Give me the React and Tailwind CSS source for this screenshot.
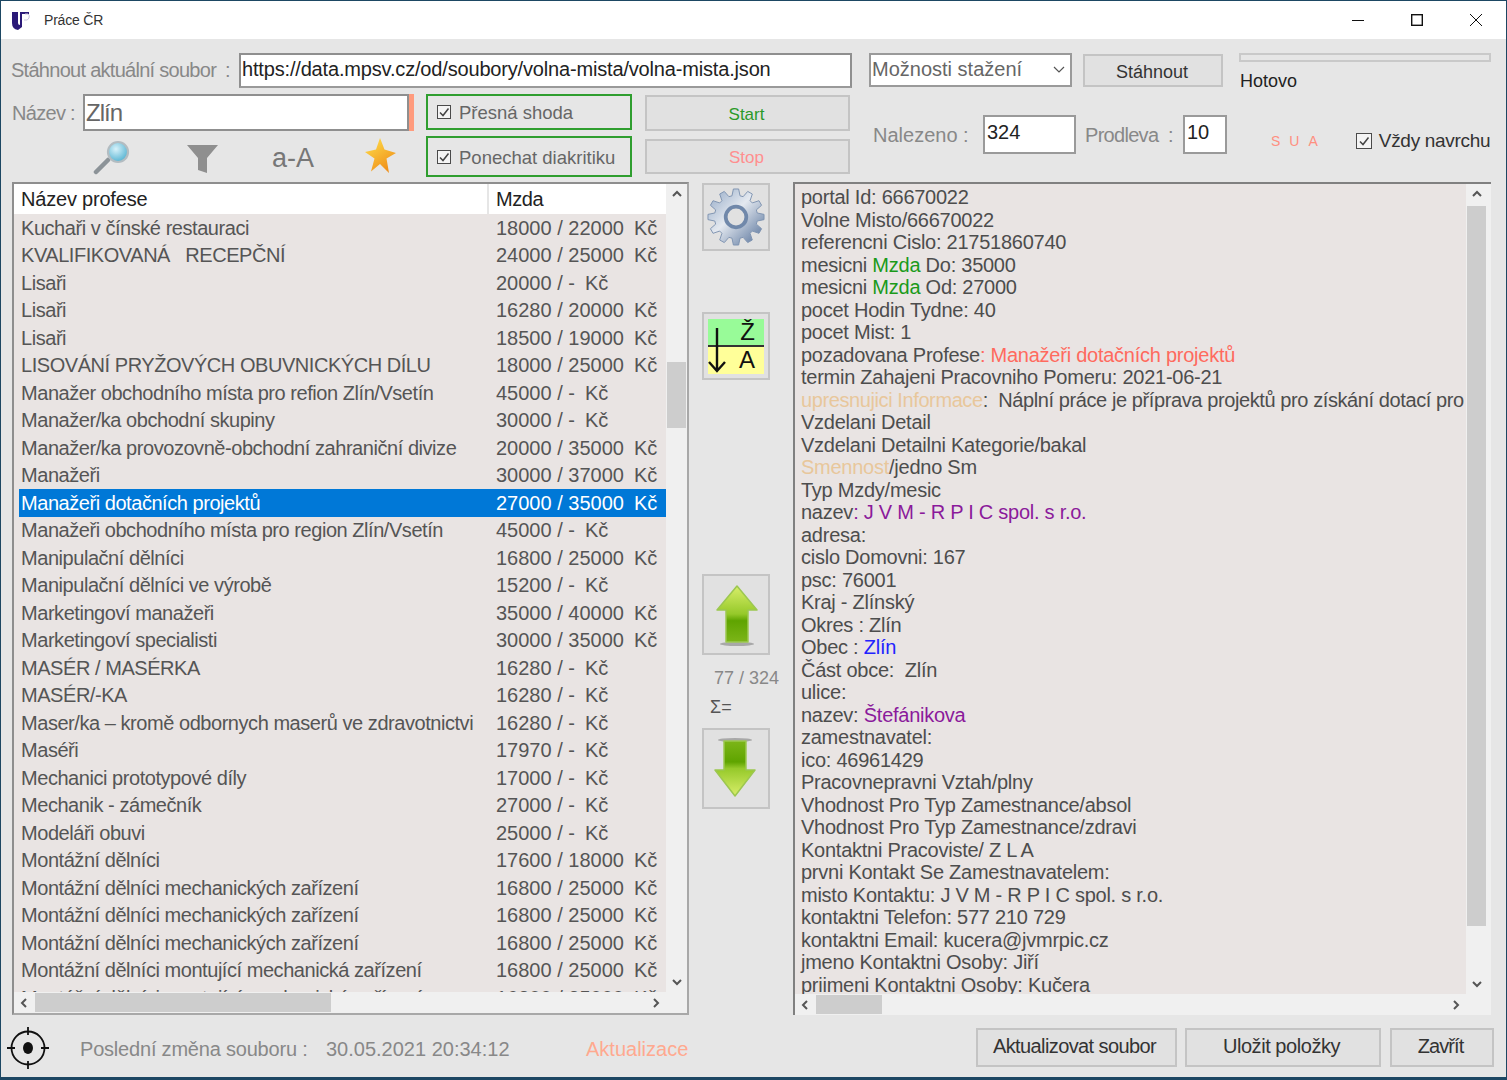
import React from "react";

const rows = [
  ["Kuchaři v čínské restauraci", "18000 / 22000", "Kč"],
  ["KVALIFIKOVANÁ   RECEPČNÍ", "24000 / 25000", "Kč"],
  ["Lisaři", "20000 / -", "Kč"],
  ["Lisaři", "16280 / 20000", "Kč"],
  ["Lisaři", "18500 / 19000", "Kč"],
  ["LISOVÁNÍ PRYŽOVÝCH OBUVNICKÝCH DÍLU", "18000 / 25000", "Kč"],
  ["Manažer obchodního místa pro refion Zlín/Vsetín", "45000 / -", "Kč"],
  ["Manažer/ka obchodní skupiny", "30000 / -", "Kč"],
  ["Manažer/ka provozovně-obchodní zahraniční divize", "20000 / 35000", "Kč"],
  ["Manažeři", "30000 / 37000", "Kč"],
  ["Manažeři dotačních projektů", "27000 / 35000", "Kč"],
  ["Manažeři obchodního místa pro region Zlín/Vsetín", "45000 / -", "Kč"],
  ["Manipulační dělníci", "16800 / 25000", "Kč"],
  ["Manipulační dělníci ve výrobě", "15200 / -", "Kč"],
  ["Marketingoví manažeři", "35000 / 40000", "Kč"],
  ["Marketingoví specialisti", "30000 / 35000", "Kč"],
  ["MASÉR / MASÉRKA", "16280 / -", "Kč"],
  ["MASÉR/-KA", "16280 / -", "Kč"],
  ["Maser/ka – kromě odbornych maserů ve zdravotnictvi", "16280 / -", "Kč"],
  ["Maséři", "17970 / -", "Kč"],
  ["Mechanici prototypové díly", "17000 / -", "Kč"],
  ["Mechanik - zámečník", "27000 / -", "Kč"],
  ["Modeláři obuvi", "25000 / -", "Kč"],
  ["Montážní dělníci", "17600 / 18000", "Kč"],
  ["Montážní dělníci mechanických zařízení", "16800 / 25000", "Kč"],
  ["Montážní dělníci mechanických zařízení", "16800 / 25000", "Kč"],
  ["Montážní dělníci mechanických zařízení", "16800 / 25000", "Kč"],
  ["Montážní dělníci montující mechanická zařízení", "16800 / 25000", "Kč"],
  ["Montážní dělníci montující mechanická zařízení", "16800 / 25000", "Kč"],
];

const gearPath = (() => {
  const teeth = 12;
  const pts = [];
  for (let i = 0; i < teeth; i++) {
    const a = (i / teeth) * Math.PI * 2;
    const s = (Math.PI * 2) / teeth;
    const add = (r, t) =>
      pts.push(`${(32 + r * Math.cos(t)).toFixed(1)} ${(32 + r * Math.sin(t)).toFixed(1)}`);
    add(23, a - s * 0.36);
    add(30, a - s * 0.18);
    add(30, a + s * 0.18);
    add(23, a + s * 0.36);
  }
  return "M" + pts.join("L") + "Z";
})();

function Check({ big }) {
  return (
    <span
      className={`flex shrink-0 items-center justify-center border border-[#4a4a4a] bg-[#f4f4f4] ${
        big ? "h-[16px] w-[16px]" : "h-[14px] w-[14px]"
      }`}
    >
      <svg viewBox="0 0 12 12" className="h-[12px] w-[12px]" fill="none" stroke="#444" strokeWidth="1.5">
        <path d="M2 6.5 5 9.5 10.5 2.5" />
      </svg>
    </span>
  );
}

function WinButton({ className, children }) {
  return (
    <div className={`flex items-center justify-center border-2 border-[#c4c4c4] bg-[#e1e1e1] ${className}`}>
      {children}
    </div>
  );
}

function ScrollArrow({ dir }) {
  const d = {
    up: "M2 7 6 3 10 7",
    down: "M2 4 6 8 10 4",
    left: "M7 2 3 6 7 10",
    right: "M4 2 8 6 4 10",
  }[dir];
  return (
    <svg viewBox="0 0 12 12" className="h-[12px] w-[12px]" fill="none" stroke="#555" strokeWidth="2">
      <path d={d} />
    </svg>
  );
}

function VScroll({ top, height }) {
  return (
    <div className="flex w-[21px] shrink-0 flex-col bg-[#f0f0f0]">
      <div className="flex h-[21px] shrink-0 items-center justify-center">
        <ScrollArrow dir="up" />
      </div>
      <div className="flex-1">
        <div className={`ml-[1px] w-[19px] bg-[#cdcdcd] ${top} ${height}`} />
      </div>
      <div className="flex h-[21px] shrink-0 items-center justify-center">
        <ScrollArrow dir="down" />
      </div>
    </div>
  );
}

function HScroll({ thumb, corner }) {
  return (
    <div className="flex h-[21px] shrink-0 bg-[#f0f0f0]">
      <div className="flex w-[21px] shrink-0 items-center justify-center">
        <ScrollArrow dir="left" />
      </div>
      <div className="flex-1 pt-[1px]">
        <div className={`h-[19px] bg-[#cdcdcd] ${thumb}`} />
      </div>
      <div className="flex w-[21px] shrink-0 items-center justify-center">
        <ScrollArrow dir="right" />
      </div>
      <div className={`shrink-0 ${corner}`} />
    </div>
  );
}

function Magnifier() {
  return (
    <svg viewBox="0 0 38 35" className="h-[35px] w-[38px]">
      <defs>
        <radialGradient id="lens" cx="0.4" cy="0.35" r="0.7">
          <stop offset="0" stopColor="#d8f2fa" />
          <stop offset="1" stopColor="#4fb0d0" />
        </radialGradient>
      </defs>
      <path d="M3 32 15 20" stroke="#8c9398" strokeWidth="4.5" strokeLinecap="round" />
      <circle cx="25" cy="12" r="10" fill="url(#lens)" stroke="#b3bcc1" strokeWidth="2.2" />
    </svg>
  );
}

function Funnel() {
  return (
    <svg viewBox="0 0 31 29" className="h-[29px] w-[31px]">
      <path d="M0 0H31L20 13V28L11 25V13Z" fill="#8f8f8f" />
    </svg>
  );
}

function Star() {
  return (
    <svg viewBox="0 0 31 35" className="h-[35px] w-[31px]">
      <defs>
        <linearGradient id="star" x1="0" y1="0" x2="0.6" y2="1">
          <stop offset="0" stopColor="#ffe24d" />
          <stop offset="1" stopColor="#f0901a" />
        </linearGradient>
      </defs>
      <path d="M15 0 19.5 11.5 31 15 21.5 20.5 24 35 15 26 6 33.5 9.5 20.5 0 14 11 11.5Z" fill="url(#star)" />
    </svg>
  );
}

function Gear() {
  return (
    <svg viewBox="0 0 64 64" className="h-[60px] w-[60px]">
      <defs>
        <linearGradient id="gear" x1="0" y1="0" x2="1" y2="1">
          <stop offset="0" stopColor="#8fa6c4" />
          <stop offset="0.45" stopColor="#e4e9f0" />
          <stop offset="1" stopColor="#4d6a94" />
        </linearGradient>
      </defs>
      <path d={gearPath} fill="url(#gear)" stroke="#7d92b0" strokeWidth="1" />
      <circle cx="32" cy="32" r="11" fill="#e1e1e1" stroke="#7088aa" strokeWidth="4" />
    </svg>
  );
}

function Arrow({ down }) {
  return (
    <svg viewBox="0 0 44 62" className="h-[62px] w-[44px]">
      <defs>
        <linearGradient id="arrowUp" x1="0" y1="0" x2="0" y2="1">
          <stop offset="0" stopColor="#d8ee6a" />
          <stop offset="0.5" stopColor="#96c92a" />
          <stop offset="0.62" stopColor="#5fa400" />
          <stop offset="1" stopColor="#7cb518" />
        </linearGradient>
        <linearGradient id="arrowDown" x1="0" y1="1" x2="0" y2="0">
          <stop offset="0" stopColor="#d8ee6a" />
          <stop offset="0.5" stopColor="#96c92a" />
          <stop offset="0.62" stopColor="#5fa400" />
          <stop offset="1" stopColor="#7cb518" />
        </linearGradient>
      </defs>
      {down ? (
        <>
          <ellipse cx="21" cy="2" rx="17" ry="2" fill="#a8a8a8" />
          <path d="M10 3H32V32H41L21 58 1 32H10Z" fill="url(#arrowDown)" stroke="#9cc750" strokeWidth="1.5" strokeLinejoin="round" />
        </>
      ) : (
        <>
          <ellipse cx="23" cy="60" rx="17" ry="2" fill="#a8a8a8" />
          <path d="M23 2 43 26H34V58H12V26H3Z" fill="url(#arrowUp)" stroke="#9cc750" strokeWidth="1.5" strokeLinejoin="round" />
        </>
      )}
    </svg>
  );
}

function AppLogo() {
  return (
    <svg viewBox="0 0 18 19" className="h-[19px] w-[18px]">
      <path d="M0 1H6V12Q6 14 8 14V1H10V16L6 19Q0 18 0 12Z" fill="#2b1a78" />
      <path d="M10 1H17V3H10Z" fill="#2b1a78" />
      <path d="M13 3H16Q18 4 17 7T12 9" fill="none" stroke="#c9c4dd" strokeWidth="1" />
    </svg>
  );
}

function Crosshair() {
  return (
    <svg viewBox="0 0 42 42" className="mt-[2px] h-[42px] w-[42px]" fill="none" stroke="#111" strokeWidth="1.8">
      <circle cx="21" cy="21" r="16.5" />
      <ellipse cx="21" cy="21" rx="5" ry="6" fill="#111" stroke="none" />
      <path d="M21 0V8M21 34V42M0 21H8M34 21H42" />
    </svg>
  );
}

function Detail({ children }) {
  return <div className="h-[22.5px] whitespace-nowrap leading-[22.5px]">{children}</div>;
}

export default function App() {
  return (
    <div className="h-[1080px] w-[1507px] overflow-hidden bg-[#1d4763] px-[1px] pt-[1px] font-['Liberation_Sans',Arial,sans-serif] text-[20px] tracking-[-0.45px] text-[#555]">
      {/* title bar */}
      <div className="flex h-[38px] items-center bg-white pl-[11px] pr-[24px] text-[#333]">
        <AppLogo />
        <span className="ml-[14px] text-[14px] tracking-[-0.2px]">Práce ČR</span>
        <div className="ml-auto flex items-center">
          <svg viewBox="0 0 12 12" className="h-[12px] w-[12px]" stroke="#111" strokeWidth="1">
            <path d="M0 6.5H12" />
          </svg>
          <svg viewBox="0 0 12 12" className="ml-[47px] h-[12px] w-[12px]" fill="none" stroke="#111" strokeWidth="1.4">
            <rect x=".7" y=".7" width="10.6" height="10.6" />
          </svg>
          <svg viewBox="0 0 12 12" className="ml-[47px] h-[12px] w-[12px]" stroke="#111" strokeWidth="1">
            <path d="M0 0 12 12M12 0 0 12" />
          </svg>
        </div>
      </div>

      <div className="h-[1038px] bg-[#e6e6e6]">
        {/* download row */}
        <div className="flex h-[55px] pl-[10px] pt-[14px]">
          <div className="flex h-[35px] w-[228px] items-center pb-[1px] tracking-[-0.72px] text-[#888]">
            <span>Stáhnout aktuální soubor</span>
            <span className="ml-[9px]">:</span>
          </div>
          <div className="flex h-[35px] w-[613px] items-center border-2 border-[#8f8f8f] border-b-[#9a9a9a] bg-white pb-[3px] pl-[1px] tracking-[-0.17px] text-[#222]">
            https://data.mpsv.cz/od/soubory/volna-mista/volna-mista.json
          </div>
          <div className="ml-[17px] flex h-[34px] w-[203px] items-center justify-between border-2 border-[#9a9a9a] bg-white pb-[2px] pl-[1px] pr-[5px] tracking-normal text-[#666]">
            Možnosti stažení
            <svg viewBox="0 0 12 8" className="mt-[2px] h-[8px] w-[12px]" fill="none" stroke="#555" strokeWidth="1.2">
              <path d="M1 1 6 6 11 1" />
            </svg>
          </div>
          <WinButton className="ml-[11px] mt-[1px] h-[33px] w-[140px] pr-[2px] pt-[3px] text-[18px] tracking-normal text-[#333]">Stáhnout</WinButton>
          <div className="ml-[16px] w-[252px]">
            <div className="h-[9px] border-2 border-[#c9c9c9] bg-[#e6e6e6]" />
            <div className="ml-[1px] mt-[6px] text-[18px] tracking-normal text-[#222]">Hotovo</div>
          </div>
        </div>

        {/* search block */}
        <div className="flex h-[88px]">
          <div className="ml-[11px] w-[402px]">
            <div className="flex h-[37px] items-center">
              <span className="w-[71px] tracking-[-0.7px] text-[#888]">Název :</span>
              <div className="flex h-[37px] w-[326px] items-center border-2 border-[#8f8f8f] bg-white pl-[1px] text-[24px] tracking-[-1px] text-[#666]">
                Zlín
              </div>
              <div className="h-[37px] w-[5px] bg-[#ff9b7d]" />
            </div>
            <div className="mt-[6px] flex h-[40px] items-center pl-[81px]">
              <Magnifier />
              <div className="ml-[56px] mt-[4px]">
                <Funnel />
              </div>
              <span className="ml-[54px] pt-[3px] text-[27px] tracking-normal text-[#777]">a-A</span>
              <div className="ml-[51px] mt-[-4px]">
                <Star />
              </div>
            </div>
          </div>

          <div className="ml-[12px] flex w-[206px] flex-col gap-[6px]">
            <label className="flex h-[36px] items-center gap-[8px] border-2 border-[#2f9e2f] pl-[9px] text-[18.5px] tracking-normal text-[#666]">
              <Check />
              <span className="pt-[2px]">Přesná shoda</span>
            </label>
            <label className="flex h-[41px] items-center gap-[8px] border-2 border-[#2f9e2f] pl-[9px] text-[18.5px] tracking-normal text-[#666]">
              <Check />
              <span className="pt-[2px]">Ponechat diakritiku</span>
            </label>
          </div>

          <div className="ml-[13px] w-[205px] pt-[1px]">
            <WinButton className="h-[36px] pr-[2px] pt-[3px] text-[17px] tracking-normal text-[#2a9a2a]">Start</WinButton>
            <WinButton className="mt-[8px] h-[35px] pr-[2px] pt-[2px] text-[17px] tracking-normal text-[#ff8f8f]">Stop</WinButton>
          </div>

          <div className="ml-[23px] mt-[21px] flex h-[39px] items-center self-start text-[#888]">
            <span className="w-[110px] tracking-normal">Nalezeno :</span>
            <div className="flex h-[39px] w-[93px] items-center border-2 border-[#9a9a9a] bg-white pb-[5px] pl-[2px] tracking-normal text-[#222]">
              324
            </div>
            <span className="ml-[9px] w-[98px] tracking-[-0.7px]">Prodleva&nbsp;&nbsp;:</span>
            <div className="flex h-[39px] w-[44px] items-center border-2 border-[#9a9a9a] bg-white pb-[5px] pl-[2px] tracking-normal text-[#222]">
              10
            </div>
            <span className="ml-[44px] mt-[13px] text-[14px] tracking-[9px] text-[#ff8f80]">SUA</span>
            <span className="ml-[29px] mt-[13px]">
              <Check big />
            </span>
            <span className="ml-[7px] mt-[13px] whitespace-nowrap text-[19px] tracking-[-0.3px] text-[#333]">Vždy navrchu</span>
          </div>
        </div>

        {/* main area */}
        <div className="flex h-[833px]">
          {/* list */}
          <div className="ml-[11px] flex h-[833px] w-[677px] flex-col border-2 border-[#8e8e8e] border-b-[#a8a8a8] border-r-[#a8a8a8] bg-white">
            <div className="flex min-h-0 flex-1">
              <div className="w-[652px] overflow-hidden">
                <div className="flex h-[30px] items-center bg-white text-[#222]">
                  <span className="w-[473px] pl-[7px] tracking-[-0.2px]">Název profese</span>
                  <span className="h-full w-[2px] bg-[#e6e6e6]" />
                  <span className="pl-[7px]">Mzda</span>
                </div>
                <div className="bg-[#e9e4e3] pl-[5px]">
                  {rows.map((r, i) => (
                    <div
                      key={i}
                      className={`flex h-[27.5px] items-center whitespace-pre pl-[2px] ${
                        i === 10 ? "bg-[#0078d7] text-white" : ""
                      }`}
                    >
                      <span className="w-[475px] shrink-0">{r[0]}</span>
                      <span className="tracking-normal">{r[1]}</span>
                      <span className="ml-[10px] tracking-normal">{r[2]}</span>
                    </div>
                  ))}
                </div>
              </div>
              <VScroll top="mt-[157px]" height="h-[66px]" />
            </div>
            <HScroll thumb="w-[296px]" corner="w-[21px]" />
          </div>

          {/* middle buttons */}
          <div className="ml-[13px] flex w-[76px] flex-col">
            <WinButton className="mt-[1px] h-[68px] w-[68px]">
              <Gear />
            </WinButton>
            <WinButton className="mt-[61px] h-[68px] w-[68px]">
              <div className="relative h-[55px] w-[56px]">
                <div className="flex h-[28px] items-end justify-end border-b-2 border-[#333] bg-[#98fb98] pr-[9px] text-[24px] leading-[26px] tracking-normal text-[#111]">Ž</div>
                <div className="flex h-[27px] items-center justify-end bg-[#ffff99] pr-[9px] text-[24px] tracking-normal text-[#111]">A</div>
                <svg viewBox="0 0 20 46" className="absolute left-0 top-[9px] h-[46px] w-[20px]" fill="none" stroke="#111" strokeWidth="2.4">
                  <path d="M9 0V43M1 34 9 43 17 34" />
                </svg>
              </div>
            </WinButton>
            <WinButton className="mt-[194px] h-[81px] w-[68px]">
              <Arrow />
            </WinButton>
            <div className="ml-[12px] mt-[10px] whitespace-nowrap text-[18px] tracking-normal text-[#888]">77 / 324</div>
            <div className="ml-[8px] mt-[2px] text-[18px] tracking-normal text-[#555]">Σ=</div>
            <WinButton className="mt-[7px] h-[81px] w-[68px]">
              <Arrow down />
            </WinButton>
          </div>

          {/* detail */}
          <div className="ml-[15px] flex h-[833px] w-[698px] flex-col border-l-2 border-t-2 border-[#808080] bg-[#f0f0f0]">
            <div className="flex min-h-0 flex-1 pr-[4px]">
              <div className="w-[671px] overflow-hidden bg-[#e9e4e3] pl-[6px] pt-[2px] tracking-[-0.25px] text-[#4d4d4d]">
                <Detail>portal Id: 66670022</Detail>
                <Detail>Volne Misto/66670022</Detail>
                <Detail>referencni Cislo: 21751860740</Detail>
                <Detail>mesicni <span className="text-[#1a9a1a]">Mzda</span> Do: 35000</Detail>
                <Detail>mesicni <span className="text-[#1a9a1a]">Mzda</span> Od: 27000</Detail>
                <Detail>pocet Hodin Tydne: 40</Detail>
                <Detail>pocet Mist: 1</Detail>
                <Detail>pozadovana Profese<span className="text-[#ff6a5e]">: Manažeři dotačních projektů</span></Detail>
                <Detail>termin Zahajeni Pracovniho Pomeru: 2021-06-21</Detail>
                <Detail><span className="tracking-[-0.4px]"><span className="text-[#e8c79b]">upresnujici Informace</span>:&nbsp; Náplní práce je příprava projektů pro získání dotací pro</span></Detail>
                <Detail>Vzdelani Detail</Detail>
                <Detail>Vzdelani Detailni Kategorie/bakal</Detail>
                <Detail><span className="text-[#e8c79b]">Smennost</span>/jedno Sm</Detail>
                <Detail>Typ Mzdy/mesic</Detail>
                <Detail>nazev<span className="text-[#8b1a9b]">: J V M - R P I C spol. s r.o.</span></Detail>
                <Detail>adresa:</Detail>
                <Detail>cislo Domovni: 167</Detail>
                <Detail>psc: 76001</Detail>
                <Detail>Kraj - Zlínský</Detail>
                <Detail>Okres : Zlín</Detail>
                <Detail>Obec : <span className="text-[#2222ff]">Zlín</span></Detail>
                <Detail>Část obce:&nbsp; Zlín</Detail>
                <Detail>ulice:</Detail>
                <Detail>nazev: <span className="text-[#8b1a9b]">Štefánikova</span></Detail>
                <Detail>zamestnavatel:</Detail>
                <Detail>ico: 46961429</Detail>
                <Detail>Pracovnepravni Vztah/plny</Detail>
                <Detail>Vhodnost Pro Typ Zamestnance/absol</Detail>
                <Detail>Vhodnost Pro Typ Zamestnance/zdravi</Detail>
                <Detail>Kontaktni Pracoviste/ Z L A</Detail>
                <Detail>prvni Kontakt Se Zamestnavatelem:</Detail>
                <Detail>misto Kontaktu: J V M - R P I C spol. s r.o.</Detail>
                <Detail>kontaktni Telefon: 577 210 729</Detail>
                <Detail>kontaktni Email: kucera@jvmrpic.cz</Detail>
                <Detail>jmeno Kontaktni Osoby: Jiří</Detail>
                <Detail>priimeni Kontaktni Osoby: Kučera</Detail>
              </div>
              <VScroll top="mt-[1px]" height="h-[720px]" />
            </div>
            <HScroll thumb="w-[66px]" corner="w-[25px]" />
          </div>
        </div>

        {/* footer */}
        <div className="flex items-center pl-[6px] pt-[10px]">
          <Crosshair />
          <span className="ml-[31px] w-[246px] pt-[4px] tracking-[-0.2px] text-[#888]">Poslední změna souboru :</span>
          <span className="w-[260px] pt-[4px] tracking-normal text-[#888]">30.05.2021 20:34:12</span>
          <span className="w-[390px] pt-[4px] tracking-normal text-[#ffa98f]">Aktualizace</span>
          <WinButton className="h-[39px] w-[201px] pb-[3px] pr-[4px] tracking-[-0.6px] text-[#333]">Aktualizovat soubor</WinButton>
          <WinButton className="ml-[8px] h-[39px] w-[196px] pb-[3px] pr-[3px] text-[#333]">Uložit položky</WinButton>
          <WinButton className="ml-[9px] h-[39px] w-[104px] pb-[3px] pr-[3px] tracking-[-0.9px] text-[#333]">Zavřít</WinButton>
        </div>
      </div>
    </div>
  );
}
